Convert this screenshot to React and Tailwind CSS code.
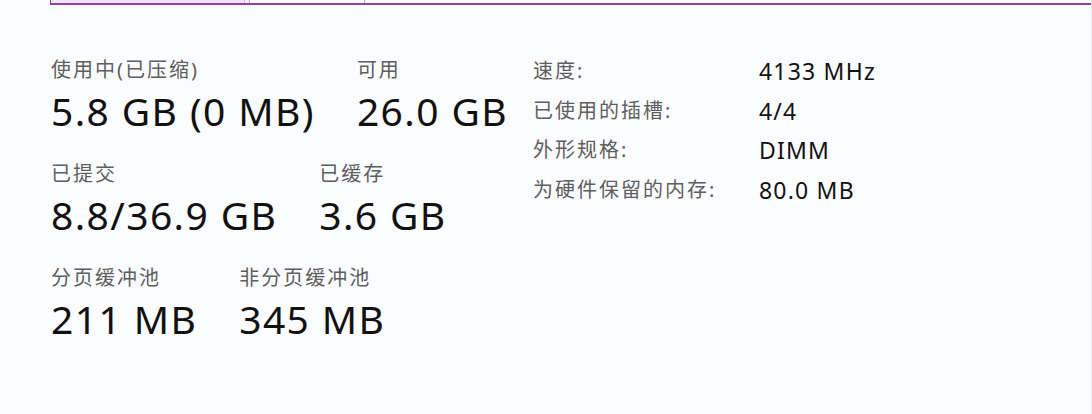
const stats = [
  [
    { label: '使用中(已压缩)', value: '5.8 GB (0 MB)' },
    { label: '可用', value: '26.0 GB' },
  ],
  [
    { label: '已提交', value: '8.8/36.9 GB' },
    { label: '已缓存', value: '3.6 GB' },
  ],
  [
    { label: '分页缓冲池', value: '211 MB' },
    { label: '非分页缓冲池', value: '345 MB' },
  ],
]

const details = [
  ['速度:', '4133 MHz'],
  ['已使用的插槽:', '4/4'],
  ['外形规格:', 'DIMM'],
  ['为硬件保留的内存:', '80.0 MB'],
]

function CompositionBar() {
  return (
    <div className="ml-[50px] h-[5px] flex border-l border-b-2 border-[#8e3fa8]">
      <div className="w-[194px] bg-[#f1e4f6] border-r border-[#d9b9e4]" />
      <div className="w-[4px] bg-[#f7eefa]" />
      <div className="w-[116px] border-l border-r border-[#c99bd9]" />
      <div className="flex-1" />
    </div>
  )
}

export default function App() {
  return (
    <div
      className="w-[1092px] h-[414px] bg-[#fbfcfe] border-r border-[#e6e8ec] overflow-hidden"
      style={{ fontFamily: '"Noto Sans", "Noto Sans CJK SC", sans-serif' }}
    >
      <CompositionBar />
      <div className="flex pl-[51px] pt-[51px]">
        <div className="w-[482px] flex flex-col gap-[25px]">
          {stats.map((row, i) => (
            <div key={i} className="flex gap-[42px]">
              {row.map((s) => (
                <div key={s.label} className="flex flex-col">
                  <span className="text-[20px] leading-[28px] tracking-[2px] text-[#5e5e5e] whitespace-nowrap">{s.label}</span>
                  <span className="mt-[3px] text-[39px] leading-[48px] tracking-[1.4px] text-[#111] whitespace-nowrap">{s.value}</span>
                </div>
              ))}
            </div>
          ))}
        </div>
        <div className="grid grid-cols-[226px_auto] auto-rows-[39.5px] pt-[1px]">
          {details.map(([k, v]) => (
            <div key={k} className="contents">
              <span className="text-[20px] leading-[28px] tracking-[2px] text-[#5e5e5e] whitespace-nowrap">{k}</span>
              <span className="text-[23px] leading-[28px] tracking-[1.2px] text-[#111] whitespace-nowrap">{v}</span>
            </div>
          ))}
        </div>
      </div>
    </div>
  )
}
